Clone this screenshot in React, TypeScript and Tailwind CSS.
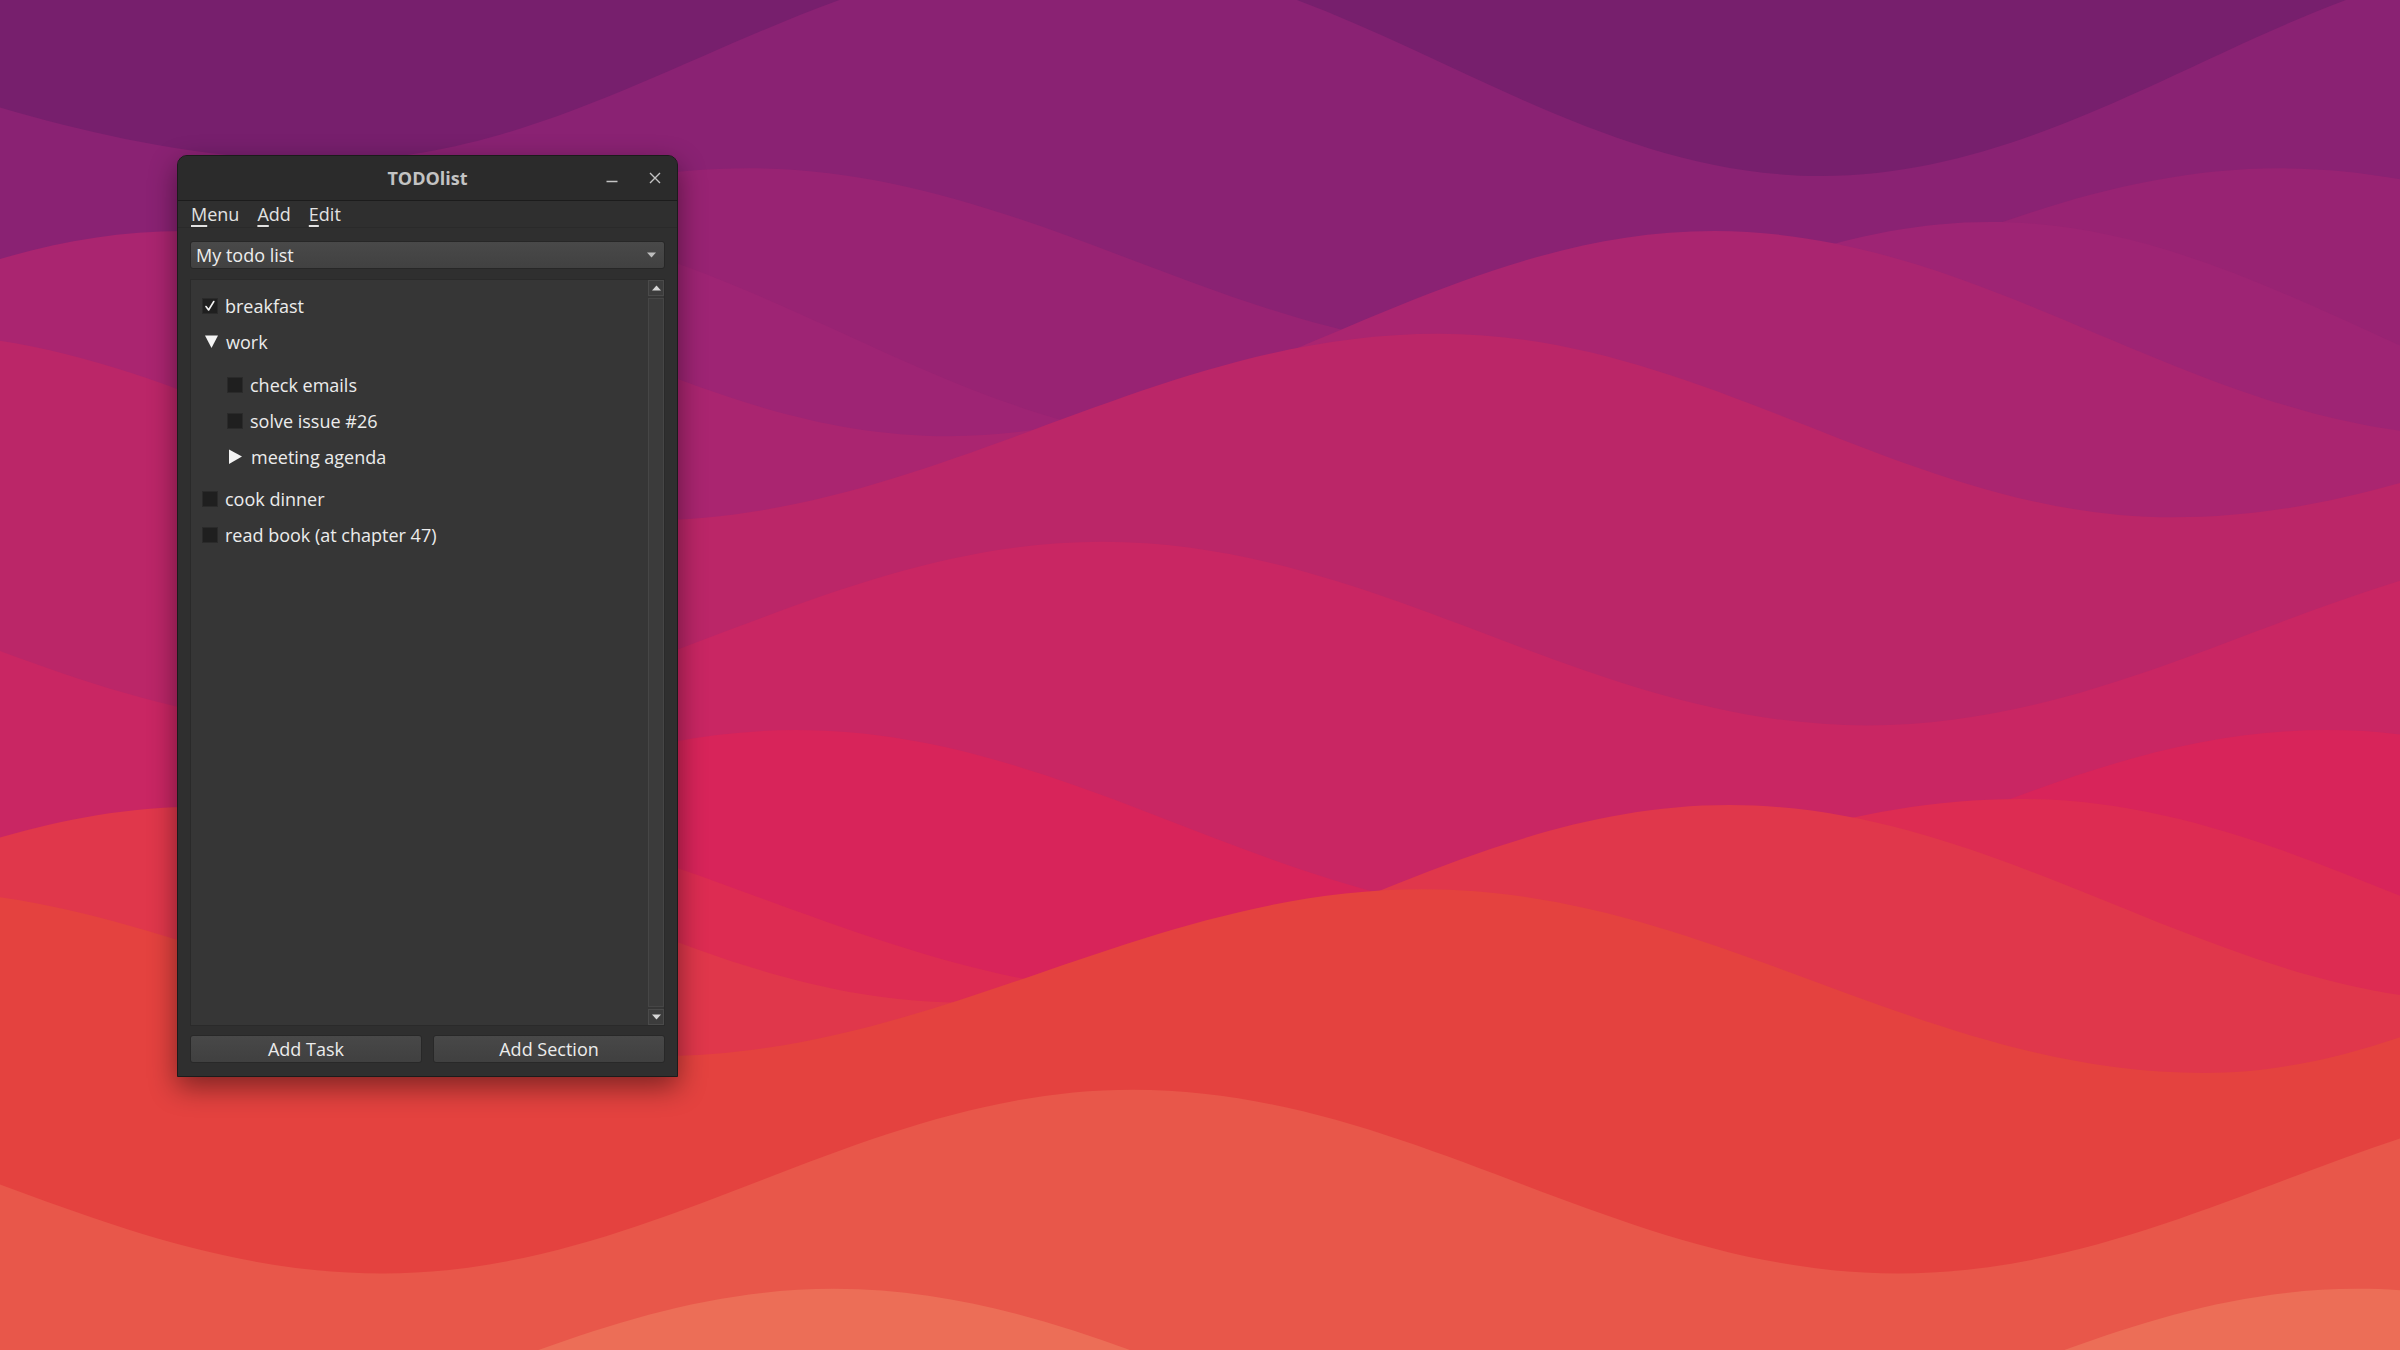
import React from "react";

type Pt = [number, number];

function wavePath(pts: Pt[]): string {
  let d = `M ${pts[0][0]} ${pts[0][1]}`;
  for (let i = 1; i < pts.length; i++) {
    const [x0, y0] = pts[i - 1];
    const [x1, y1] = pts[i];
    const k = (x1 - x0) * 0.364;
    d += ` C ${x0 + k} ${y0} ${x1 - k} ${y1} ${x1} ${y1}`;
  }
  const last = pts[pts.length - 1];
  d += ` L ${last[0]} 900 L ${pts[0][0]} 900 Z`;
  return d;
}

const bands: { c: string; p: Pt[] }[] = [
  { c: "#8a2273", p: [[-420, -30], [215, 105], [700, -30], [1190, 115], [1680, -30]] },
  { c: "#982373", p: [[-10, 215], [490, 110], [990, 230], [1490, 110], [1990, 230]] },
  { c: "#9e2474", p: [[-200, 290], [300, 145], [800, 290], [1300, 145], [1800, 290]] },
  { c: "#aa2570", p: [[-380, 285], [120, 151], [620, 285], [1120, 151], [1620, 285]] },
  { c: "#bb2668", p: [[-60, 218], [420, 340], [940, 218], [1420, 338], [1940, 218]] },
  { c: "#c92663", p: [[-280, 354], [220, 474], [720, 354], [1220, 474], [1720, 354]] },
  { c: "#d8245a", p: [[20, 600], [520, 477], [1020, 600], [1520, 477], [2020, 600]] },
  { c: "#dd2c52", p: [[-280, 650], [220, 522], [770, 650], [1320, 522], [1820, 650]] },
  { c: "#e0374b", p: [[-370, 655], [130, 527], [630, 655], [1130, 526], [1630, 655]] },
  { c: "#e4423f", p: [[-70, 581], [430, 690], [930, 581], [1440, 701], [1880, 581]] },
  { c: "#e8574a", p: [[-260, 712], [250, 832], [740, 712], [1240, 832], [1740, 712]] },
  { c: "#ec6e57", p: [[45, 965], [545, 842], [1045, 965], [1540, 842], [2040, 965]] },
];

function Wallpaper() {
  return (
    <svg
      className="absolute inset-0"
      width={2400}
      height={1350}
      viewBox="0 0 1568 882"
      preserveAspectRatio="none"
    >
      <rect x={0} y={0} width={1568} height={882} fill="#771f6d" />
      {bands.map((b, i) => (
        <path key={i} d={wavePath(b.p)} fill={b.c} />
      ))}
    </svg>
  );
}

function CheckBox({ checked }: { checked?: boolean }) {
  return (
    <div className="w-[16px] h-[16px] shrink-0 bg-[#1f1f1f] border border-[#2a2a2a] flex items-center justify-center">
      {checked && (
        <svg width="14" height="14" viewBox="0 0 14 14">
          <path d="M3 7.5 L5.6 11 L10.8 2.5" stroke="#f2f2f2" strokeWidth="1.6" fill="none" strokeLinecap="round" strokeLinejoin="round" />
        </svg>
      )}
    </div>
  );
}

function TriDown() {
  return (
    <div className="w-[16px] h-[16px] shrink-0 flex items-center justify-start">
      <svg width="16" height="16" viewBox="0 0 16 16">
        <polygon points="3,1.5 16,1.5 9.5,14" fill="#f4f4f4" />
      </svg>
    </div>
  );
}

function TriRight() {
  return (
    <div className="w-[16px] h-[16px] shrink-0 flex items-center">
      <svg width="16" height="16" viewBox="0 0 16 16">
        <polygon points="2,0.5 15,7.5 2,15" fill="#f4f4f4" />
      </svg>
    </div>
  );
}

function Row({ icon, label, indent, gap }: { icon: React.ReactNode; label: string; indent?: boolean; gap?: string }) {
  return (
    <div className={`h-[36px] flex items-center ${indent ? "pl-[36px]" : "pl-[11px]"}`}>
      {icon}
      <span className={`${gap ?? "ml-[7px]"} text-[18px] text-[#ececec] leading-none whitespace-nowrap`}>{label}</span>
    </div>
  );
}

function MenuItem({ first, rest }: { first: string; rest: string }) {
  return (
    <span className="text-[18px] text-[#e2e2e2] leading-none">
      <span className="underline decoration-[1.5px] underline-offset-[4px]">{first}</span>
      {rest}
    </span>
  );
}

function Window() {
  return (
    <div className="w-[501px] h-[922px] flex flex-col rounded-t-[10px] border border-[#1b1b1b] bg-[#2f2f2f] shadow-[0_10px_28px_rgba(0,0,0,0.45)] overflow-hidden">
      {/* Title bar */}
      <div className="h-[45px] shrink-0 grid grid-cols-[1fr_auto_1fr] items-center bg-[#2b2b2b] border-b border-[#1c1c1c]">
        <div />
        <div className="text-[18px] font-bold text-[#c3c3c3] leading-none pb-[1px]">TODOlist</div>
        <div className="flex justify-end items-center pr-[5px] gap-[9px]">
          <div className="w-[34px] h-[34px] flex items-center justify-center">
            <svg width="12" height="12" viewBox="0 0 12 12">
              <line x1="0.5" y1="9.5" x2="11.5" y2="9.5" stroke="#c4c4c4" strokeWidth="1.3" />
            </svg>
          </div>
          <div className="w-[34px] h-[34px] flex items-center justify-center">
            <svg width="12" height="12" viewBox="0 0 12 12">
              <path d="M1 1 L11 11 M11 1 L1 11" stroke="#c4c4c4" strokeWidth="1.4" />
            </svg>
          </div>
        </div>
      </div>

      {/* Menu bar */}
      <div className="h-[27px] shrink-0 flex items-center gap-[18px] pl-[13px] bg-[#2f2f2f] border-b border-[#2a2a2a]">
        <MenuItem first="M" rest="enu" />
        <MenuItem first="A" rest="dd" />
        <MenuItem first="E" rest="dit" />
      </div>

      {/* Body */}
      <div className="flex-1 flex flex-col px-[12px] pt-[13px] pb-[13px] min-h-0">
        {/* Combo box */}
        <div className="h-[28px] shrink-0 rounded-[3px] border border-[#272727] bg-linear-to-b from-[#494949] to-[#414141] flex items-center justify-between pl-[5px] pr-[8px]">
          <span className="text-[18px] text-[#ededed] leading-none">My todo list</span>
          <svg width="9" height="6" viewBox="0 0 9 6">
            <polygon points="0,0.5 9,0.5 4.5,5.5" fill="#bdbdbd" />
          </svg>
        </div>

        {/* List */}
        <div className="mt-[10px] flex-1 min-h-0 flex border border-[#2a2a2a] bg-[#363636]">
          <div className="flex-1 flex flex-col pt-[8px]">
            <Row icon={<CheckBox checked />} label="breakfast" />
            <Row icon={<TriDown />} label="work" gap="ml-[8px]" />
            <div className="flex flex-col pt-[7px] pb-[6px]">
              <Row indent icon={<CheckBox />} label="check emails" />
              <Row indent icon={<CheckBox />} label="solve issue #26" />
              <Row indent icon={<TriRight />} label="meeting agenda" gap="ml-[8px]" />
            </div>
            <Row icon={<CheckBox />} label="cook dinner" />
            <Row icon={<CheckBox />} label="read book (at chapter 47)" />
          </div>
          {/* Scrollbar */}
          <div className="w-[16px] shrink-0 flex flex-col">
            <div className="h-[16px] shrink-0 border border-[#4a4a4a] bg-[#3c3c3c] flex items-center justify-center">
              <svg width="9" height="6" viewBox="0 0 9 6">
                <polygon points="0,5.5 9,5.5 4.5,0.5" fill="#d6d6d6" />
              </svg>
            </div>
            <div className="flex-1 my-[2px] border border-[#464646] bg-[#3b3b3b]" />
            <div className="h-[16px] shrink-0 border border-[#4a4a4a] bg-[#3c3c3c] flex items-center justify-center">
              <svg width="9" height="6" viewBox="0 0 9 6">
                <polygon points="0,0.5 9,0.5 4.5,5.5" fill="#d6d6d6" />
              </svg>
            </div>
          </div>
        </div>

        {/* Buttons */}
        <div className="mt-[9px] h-[28px] shrink-0 grid grid-cols-2 gap-[11px]">
          <div className="rounded-[3px] border border-[#282828] bg-linear-to-b from-[#484848] to-[#404040] flex items-center justify-center text-[18px] text-[#ececec] leading-none">
            Add Task
          </div>
          <div className="rounded-[3px] border border-[#282828] bg-linear-to-b from-[#484848] to-[#404040] flex items-center justify-center text-[18px] text-[#ececec] leading-none">
            Add Section
          </div>
        </div>
      </div>
    </div>
  );
}

export default function App() {
  return (
    <div className="relative w-[2400px] h-[1350px] overflow-hidden bg-[#771f6d] font-['Open_Sans','Noto_Sans',sans-serif]">
      <Wallpaper />
      <div className="relative pl-[177px] pt-[155px]">
        <Window />
      </div>
    </div>
  );
}
